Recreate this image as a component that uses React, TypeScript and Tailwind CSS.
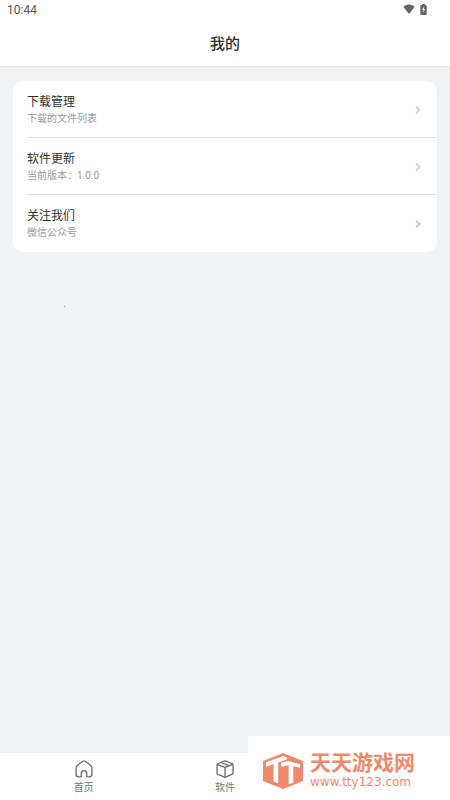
import React from "react";

const FONT = "font-['Roboto','Noto_Sans_CJK_SC',sans-serif]";

const items = [
  { title: "下载管理", note: "下载的文件列表" },
  { title: "软件更新", note: "当前版本：1.0.0" },
  { title: "关注我们", note: "微信公众号" },
];

function WifiIcon() {
  return (
    <svg width="12" height="11" viewBox="0 0 13 12" fill="#666" aria-hidden="true">
      <path d="M.4 3.3C4-.2 9-.2 12.600 3.300L6.500 11Z" />
    </svg>
  );
}

function BatteryIcon() {
  return (
    <svg width="7" height="11" viewBox="0 0 7 12" aria-hidden="true">
      <path d="M2 0h3v1h1.200q.8 0 .8.800v9.400q0 .8-.8.800H.8q-.8 0-.8-.8V1.800Q0 1 .8 1H2Z" fill="#666" />
      <path d="M4.100 2.800 2 6.600h1.300v2.800l1.900-3.900H4.100Z" fill="#fff" />
    </svg>
  );
}

function ChevronIcon() {
  return (
    <svg width="6" height="8" viewBox="0 0 6 8" fill="none" stroke="#d0d0d0" strokeWidth="1.800" aria-hidden="true">
      <path d="M1 .5 4.700 4 1 7.500" />
    </svg>
  );
}

function HomeIcon() {
  return (
    <svg width="18" height="18" viewBox="0 0 18 18" fill="none" stroke="#6b6b6b" strokeWidth="1.300" strokeLinejoin="round" aria-hidden="true">
      <path d="M7.500 1.400Q9 .3 10.500 1.400L15.800 5.400Q16.900 6.300 16.900 7.700V14.200Q16.900 16.900 14.200 16.900H12.300Q11.700 16.900 11.700 16.300V13.300Q11.700 10.600 9 10.600T6.300 13.300V16.300Q6.300 16.900 5.700 16.900H3.800Q1.100 16.900 1.100 14.200V7.700Q1.100 6.300 2.200 5.400Z" />
    </svg>
  );
}

function BoxIcon() {
  return (
    <svg width="18" height="18" viewBox="0 0 18 18" fill="none" stroke="#6b6b6b" strokeWidth="1.300" strokeLinejoin="round" strokeLinecap="round" aria-hidden="true">
      <path d="M8 1.100Q9 .7 10 1.100L15.900 3.500Q17 4 17 5V12.900Q17 13.900 16 14.400L10 16.900Q9 17.300 8 16.900L2 14.400Q1 13.900 1 12.900V5Q1 4 2.100 3.500Z" />
      <path d="M1.400 4.300 9 7.400 16.600 4.300M9 7.400V17M5 2.500 12.700 5.700" />
    </svg>
  );
}

function BrandMark() {
  return (
    <svg width="40" height="36" viewBox="0 0 40 36" aria-hidden="true">
      <path d="M20 0 40 8V28L20 36 0 28V8Z" fill="#ee8a6c" />
      <path d="M3 9.200 20.500 3 24 4.400V6.300L15.200 9.400V30.300L10.500 28.500V11.100L3 13.700Z" fill="#fff" />
      <path d="M18 9.800 25 8 37 11.300V14.800L30.300 13.200V29.400L25.600 31.200V12.200L18 13.800Z" fill="#fff" />
    </svg>
  );
}

export default function App() {
  return (
    <div className={`${FONT} relative flex min-h-screen flex-col bg-[#f0f2f4] text-[#303030]`}>
      <header className="border-b border-[#e8eaec] bg-white">
        <div className="flex h-5 items-center justify-between pl-[7px] pr-[23px] text-[12px] text-[#555]">
          <span>10:44</span>
          <span className="flex items-center gap-[5px] pb-0.5">
            <WifiIcon />
            <BatteryIcon />
          </span>
        </div>
        <h1 className="pt-3 pb-2.5 text-center text-[15px] leading-6 font-medium">我的</h1>
      </header>

      <main className="flex-1 px-[13px] pt-3.5">
        <ul className="overflow-hidden rounded-[10px] bg-white pl-3.5">
          {items.map((item) => (
            <li key={item.title} className="h-[57px] border-b border-[#e2e3e4] last:border-b-0">
              <button type="button" className="flex h-full w-full items-center justify-between pt-px pr-4 text-left">
                <span className="flex flex-col">
                  <span className="text-[12px] leading-[18px]">{item.title}</span>
                  <span className="text-[10px] leading-4 text-[#999]">{item.note}</span>
                </span>
                <ChevronIcon />
              </button>
            </li>
          ))}
        </ul>
      </main>

      <span className="absolute top-[306px] left-16 size-px bg-[#38c99a]" />

      <nav className="grid h-12 grid-cols-3 border-t border-[#e8eaec] bg-white px-[13px] text-[10px] text-[#777]">
        <a href="#home" className="flex flex-col items-center gap-[3px] pt-[7px] leading-3.5">
          <HomeIcon />
          首页
        </a>
        <a href="#software" className="flex flex-col items-center gap-[3px] pt-[7px] leading-3.5">
          <BoxIcon />
          软件
        </a>
      </nav>

      <div className="absolute right-0 bottom-0 flex h-16 w-[202px] items-center gap-[7px] bg-white pt-1.5 pl-[15px] text-[#ee8a6c]">
        <BrandMark />
        <div className="flex flex-col">
          <span className="text-[21px] leading-[22px] font-bold">天天游戏网</span>
          <span className="font-['DejaVu_Sans',sans-serif] text-[12px] leading-4">www.tty123.com</span>
        </div>
      </div>
    </div>
  );
}
